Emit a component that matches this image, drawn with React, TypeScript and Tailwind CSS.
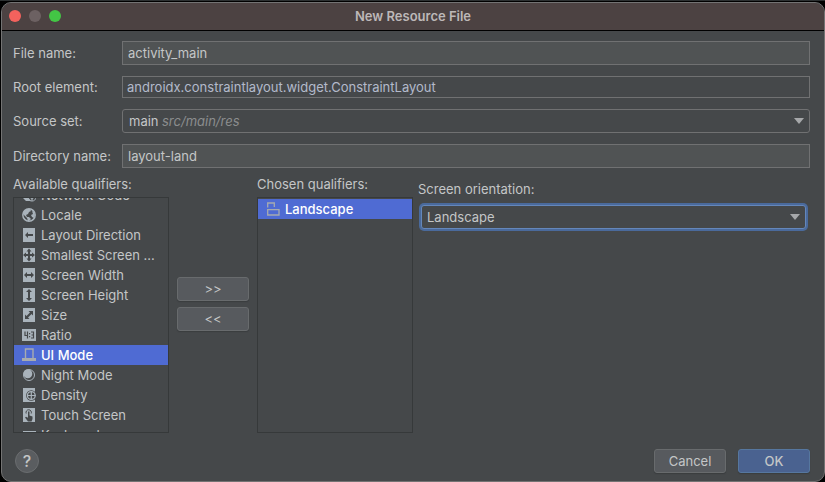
import type { ReactNode } from "react";
import clsx from "clsx";

const FILL = "#a9b3bb";
const INK = "#45484a";

function Tile({ children }: { children?: ReactNode }) {
  return (
    <svg width="14" height="14" viewBox="0 0 14 14" className="shrink-0" aria-hidden="true">
      <rect x="1" y="0" width="12" height="14" fill={FILL} />
      {children}
    </svg>
  );
}

function Plain({ children }: { children?: ReactNode }) {
  return (
    <svg width="14" height="14" viewBox="0 0 14 14" className="shrink-0" aria-hidden="true">
      {children}
    </svg>
  );
}

const qualifiers: { name: string; icon: ReactNode }[] = [
  {
    name: "Network Code",
    icon: (
      <Plain>
        <path d="M1 1h5v8l3 4H4L1 10z" fill={FILL} />
        <path d="M6 8c0 4 2 5 4 5s4-1 4-5M8 7c0 2 1 4 2 4s2-2 2-4M10 5v8" fill="none" stroke={FILL} />
      </Plain>
    ),
  },
  {
    name: "Locale",
    icon: (
      <Plain>
        <circle cx="7" cy="7" r="6.2" fill={INK} stroke={FILL} strokeWidth="1.5" />
        <path d="M1 5l1-2 3-2h3l1 2-2 1-1 2-2 1 1 2h2l2 2-2 2-1 0-1-3-2-2-2-2zM10 3l2 1 1 3-1 3-2-1-1-2 2-1z" fill={FILL} />
      </Plain>
    ),
  },
  {
    name: "Layout Direction",
    icon: (
      <Tile>
        <path d="M3 7l3-3v2h5v2H6v2z" fill={INK} />
      </Tile>
    ),
  },
  {
    name: "Smallest Screen ...",
    icon: (
      <Tile>
        <path d="M7 .5l2.500 3H8V6h2V4.500L13 7l-3 2.500V8H8v2.500h1.500L7 13.500l-2.500-3H6V8H4v1.500L1 7l3-2.500V6h2V3.500H4.500z" fill={INK} />
      </Tile>
    ),
  },
  {
    name: "Screen Width",
    icon: (
      <Tile>
        <path d="M2 7l3-3v2h4V4l3 3-3 3V8H5v2z" fill={INK} />
      </Tile>
    ),
  },
  {
    name: "Screen Height",
    icon: (
      <Tile>
        <path d="M7 1l3 3H8v6h2l-3 3-3-3h2V4H4z" fill={INK} />
      </Tile>
    ),
  },
  {
    name: "Size",
    icon: (
      <Tile>
        <path d="M11 3v4.500L9.500 6 6 9.500 7.500 11H3V6.500L4.500 8 8 4.500 6.500 3z" fill={INK} />
      </Tile>
    ),
  },
  {
    name: "Ratio",
    icon: (
      <Plain>
        <rect y="1" width="14" height="12" fill={FILL} />
        <path d="M3 3.500v4h3M5.500 3.500v7M9 4h2.500v6H9M9.500 7h2" fill="none" stroke={INK} strokeWidth="1.200" />
        <path d="M7 5h1.200v1.200H7zM7 8h1.200v1.200H7z" fill={INK} />
      </Plain>
    ),
  },
  {
    name: "UI Mode",
    icon: (
      <Plain>
        <path d="M3.500 10V1h7.500v9" fill="none" stroke="#a7abb0" strokeWidth="1.400" />
        <path d="M0 10h14v3H0z" fill="#a7abb0" />
      </Plain>
    ),
  },
  {
    name: "Night Mode",
    icon: (
      <Plain>
        <circle cx="7" cy="7" r="5.500" fill={INK} stroke={FILL} />
        <circle cx="5.800" cy="5.800" r="4.500" fill={FILL} />
      </Plain>
    ),
  },
  {
    name: "Density",
    icon: (
      <Tile>
        <circle cx="9.300" cy="7.500" r="5.200" fill={INK} />
        <circle cx="9.300" cy="7.500" r="3.900" fill="none" stroke={FILL} strokeWidth="1.300" />
        <path d="M9.300 3.500v8M5.500 7.500h8" stroke={FILL} strokeWidth="1.200" />
      </Tile>
    ),
  },
  {
    name: "Touch Screen",
    icon: (
      <Tile>
        <path d="M6 3.500h1.500v4l3 1V11L9.500 13.500H6l-3-4 1-.8 2 1z" fill={INK} />
        <path d="M4.200 5.500a2.700 2.700 0 1 1 5 0" fill="none" stroke={INK} />
      </Tile>
    ),
  },
  {
    name: "Keyboard",
    icon: (
      <Plain>
        <rect y="3" x="1" width="13" height="9" fill={FILL} />
        <path d="M3 6h9M3 8h9M5 10h5" stroke={INK} strokeDasharray="1 1" />
      </Plain>
    ),
  },
];

function Row({ id, label, children }: { id: string; label: string; children: ReactNode }) {
  return (
    <div className="flex items-center">
      <label htmlFor={id} className="w-[109px] shrink-0">
        {label}
      </label>
      {children}
    </div>
  );
}

function Arrow() {
  return (
    <svg
      width="10"
      height="6"
      viewBox="0 0 10 6"
      aria-hidden="true"
      className="pointer-events-none absolute top-1/2 right-[6px] -translate-y-1/2"
    >
      <path d="M0 0h10L5 6z" fill="#a6a8aa" />
    </svg>
  );
}

function QualifierItem({ name, icon, selected }: { name: string; icon: ReactNode; selected?: boolean }) {
  return (
    <li
      role="option"
      aria-selected={!!selected}
      className={clsx(
        "flex h-5 shrink-0 items-center gap-[5px] pl-2 whitespace-nowrap",
        selected && "bg-[#4f6bd3] font-medium text-white",
      )}
    >
      {icon}
      {name}
    </li>
  );
}

const field = "min-w-0 flex-1 rounded-none border border-[#707172] px-[5px] outline-none";
const button =
  "h-6 w-[72px] rounded-[3px] border border-[#686b6d] bg-[#575a5e] text-center shadow-[0_1px_1px_#3a3d3f]";
const list = "flex min-h-0 flex-1 flex-col overflow-hidden border border-[#36393a]";

export default function App() {
  return (
    <div className="flex h-screen min-h-[400px] flex-col border-t border-[#2c3031] bg-black pt-px pl-px font-['Inter','Liberation_Sans',sans-serif] text-[13px] leading-4 text-[#c4c6c7]">
      <main className="flex min-h-0 flex-1 flex-col overflow-hidden rounded-[10px] border border-[#737373] bg-[#45484a]">
        <header className="relative flex h-7 shrink-0 items-center justify-center border-b border-black bg-[#4c4242] pb-px">
          <div className="absolute left-[7px] flex gap-2">
            <button aria-label="Close" className="size-3 rounded-full bg-[#f3625d]" />
            <button aria-label="Minimize" className="size-3 rounded-full bg-[#6c6162]" />
            <button aria-label="Zoom" className="size-3 rounded-full bg-[#43c645]" />
          </div>
          <h1 className="font-semibold text-[#bdb8b8]">New Resource File</h1>
        </header>

        <form
          className="flex min-h-0 flex-1 flex-col pt-[10px] pr-[14px] pb-2 pl-[11px]"
          onSubmit={(e) => e.preventDefault()}
        >
          <div className="flex flex-col gap-[11px]">
            <Row id="file" label="File name:">
              <input id="file" defaultValue="activity_main" className={clsx(field, "h-6 bg-[#505354]")} />
            </Row>
            <Row id="root-element" label="Root element:">
              <input
                id="root-element"
                defaultValue="androidx.constraintlayout.widget.ConstraintLayout"
                className="h-[22px] min-w-0 flex-1 border border-[#707172] px-1 text-[#b3bacb] outline-none"
              />
            </Row>
            <Row id="source" label="Source set:">
              <div className="relative flex min-w-0 flex-1 items-center">
                <select
                  id="source"
                  className="h-6 w-full appearance-none rounded-[3px] border border-[#707172] bg-[#45484a] px-[6px] outline-none"
                >
                  <option>main</option>
                </select>
                <span className="pointer-events-none absolute left-10 text-[#8b8d8e] italic">src/main/res</span>
                <Arrow />
              </div>
            </Row>
            <Row id="directory" label="Directory name:">
              <input id="directory" defaultValue="layout-land" className={clsx(field, "h-6 bg-[#505354]")} />
            </Row>
          </div>

          <div className="flex min-h-0 flex-1 pt-2">
            <section className="flex w-[156px] shrink-0 flex-col">
              <h2 id="available" className="pb-[5px] whitespace-nowrap">
                Available qualifiers:
              </h2>
              <ul role="listbox" aria-labelledby="available" className={list}>
                <div role="presentation" className="-mt-[13px] flex flex-col">
                  {qualifiers.map((q) => (
                    <QualifierItem key={q.name} name={q.name} icon={q.icon} selected={q.name === "UI Mode"} />
                  ))}
                </div>
              </ul>
            </section>

            <div className="flex w-[88px] shrink-0 flex-col items-center justify-center gap-[6px] pb-[2px]">
              <button type="button" aria-label="Add qualifier" className={button}>
                {">>"}
              </button>
              <button type="button" aria-label="Remove qualifier" className={button}>
                {"<<"}
              </button>
            </div>

            <section className="flex w-[156px] shrink-0 flex-col">
              <h2 id="chosen" className="pb-[5px] whitespace-nowrap">
                Chosen qualifiers:
              </h2>
              <ul role="listbox" aria-labelledby="chosen" className={clsx(list, "pt-px")}>
                <QualifierItem
                  name="Landscape"
                  selected
                  icon={
                    <Plain>
                      <path d="M1.700 5.500V1h6.600v4" fill="none" stroke="#a7abb0" strokeWidth="1.300" />
                      <path d="M1.700 7.700h11.300v5.300H1.700z" fill="none" stroke="#a7abb0" strokeWidth="1.300" />
                    </Plain>
                  }
                />
              </ul>
            </section>

            <section className="flex min-w-0 flex-1 flex-col gap-[8px] pt-[5px] pr-1 pl-2">
              <label htmlFor="orientation" className="-ml-[3px]">
                Screen orientation:
              </label>
              <div className="relative">
                <select
                  id="orientation"
                  className="block h-6 w-full appearance-none rounded-[3px] border border-[#6487bb] bg-[#45484a] px-[5px] ring-2 ring-[#4a6a9c] outline-none"
                >
                  <option>Landscape</option>
                  <option>Portrait</option>
                  <option>Square</option>
                </select>
                <Arrow />
              </div>
            </section>
          </div>

          <footer className="flex items-center gap-3 pt-4">
            <button
              type="button"
              aria-label="Help"
              className="ml-[2px] size-6 rounded-full border border-[#6a6d6f] bg-[#5a5d60] text-base leading-4 font-medium"
            >
              ?
            </button>
            <button type="button" className={clsx(button, "ml-auto")}>
              Cancel
            </button>
            <button
              type="submit"
              className="h-6 w-[72px] rounded-[3px] border border-[#56779f] bg-[#4a6290] text-center font-medium shadow-[0_1px_1px_#3a3d3f]"
            >
              OK
            </button>
          </footer>
        </form>
      </main>
    </div>
  );
}
